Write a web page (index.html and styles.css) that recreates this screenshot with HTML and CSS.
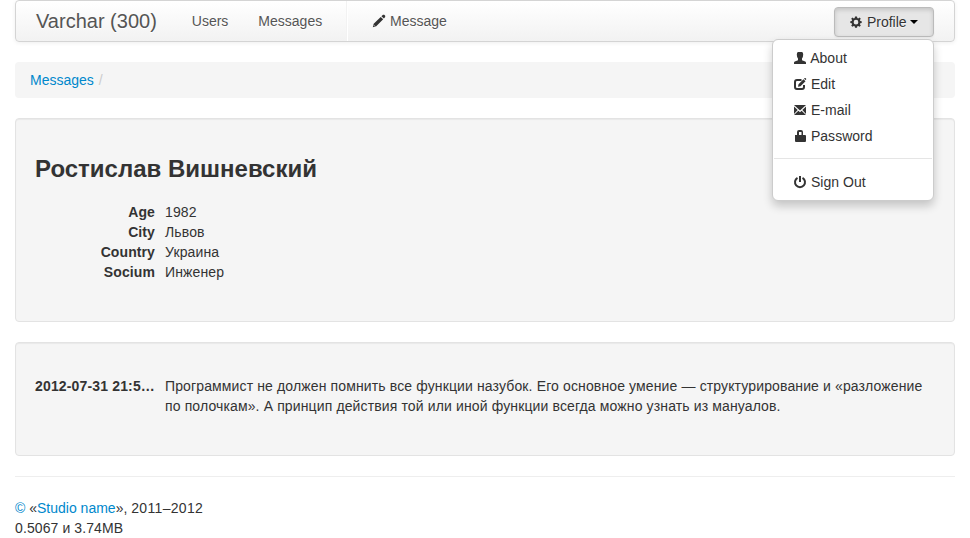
FILE: index.html
```html
<!DOCTYPE html>
<html lang="ru">
<head>
<meta charset="utf-8">
<title>Varchar (300)</title>
<link rel="stylesheet" href="styles.css">
</head>
<body>
<div class="container">
  <nav class="navbar">
    <a class="brand" href="#">Varchar (300)</a>
    <ul class="nav">
      <li><a href="#">Users</a></li>
      <li><a href="#">Messages</a></li>
      <li class="divider-vertical"></li>
      <li><a href="#"><svg class="icon" viewBox="0 0 14 14"><path d="M.8 13.200l.9-3.400L8.700 2.900l2.500 2.400L4.200 12.200zM9.400 2.200L11 .8h1.200l1 1v1.200l-1.300 1.600z"/><path class="cut" d="M1.900 11.200l1 1"/></svg> Message</a></li>
    </ul>
    <div class="btn-group">
      <a class="btn" href="#"><svg class="icon" viewBox="0 0 14 14"><path fill-rule="evenodd" d="M6 1.500h2l.3 1.500.9.400 1.400-.9 1.200 1.200-.9 1.400.4.900 1.400.3v1.700l-1.400.3-.4.900.9 1.400-1.200 1.200-1.400-.9-.9.400L8 12.800H6l-.3-1.500-.9-.4-1.400.9-1.200-1.200.9-1.400-.4-.9L1.300 8V6.300L2.700 6l.4-.9-.9-1.400 1.200-1.200 1.400.9.900-.4zM7 4.800a2.350 2.350 0 1 0 0 4.700 2.350 2.350 0 0 0 0-4.700z"/></svg> Profile <span class="caret"></span></a>
      <ul class="menu">
        <li><a href="#"><svg class="icon" viewBox="0 0 14 14"><path d="M5 1h4q1.200.4 1.200 2.500 0 2.500-1.200 4v1.700l3.200 1.200q.8.400.8 1.300V13H1v-1.300q0-.9.8-1.300L5 9.200V7.500q-1.200-1.500-1.200-4Q3.800 1.400 5 1z"/></svg> About</a></li>
        <li><a href="#"><svg class="icon" viewBox="0 0 14 14"><path class="line" d="M8.500 3H4Q2 3 2 5v5q0 2 2 2h5q2 0 2-2V8"/><path d="M5 9.800l.5-2.500 5-5 2 2-5 5zM11 1.800l.8-.8h.6l.8.800v.6l-.7.700z"/></svg> Edit</a></li>
        <li><a href="#"><svg class="icon" viewBox="0 0 14 14"><path d="M1 2h12L7 7.600zM1 3.400L4.700 7 1 11zM13 3.400L9.300 7 13 11zM5.400 7.700L7 9.200l1.600-1.500L13 12H1z"/></svg> E-mail</a></li>
        <li><a href="#"><svg class="icon" viewBox="0 0 14 14"><path fill-rule="evenodd" d="M2 6h2V3q0-2 2-2h2q2 0 2 2v3h2q1 0 1 1v5q0 1-1 1H3q-1 0-1-1zM6 6h2.500V3H6z"/></svg> Password</a></li>
        <li class="divider"></li>
        <li><a href="#"><svg class="icon" viewBox="0 0 14 14"><path class="line" d="M4.500 2.800a5 5 0 1 0 5 0M7 1v6"/></svg> Sign Out</a></li>
      </ul>
    </div>
  </nav>

  <ul class="breadcrumb"><li><a href="#">Messages</a> <span class="slash">/</span></li></ul>

  <section class="well profile">
    <h3>Ростислав Вишневский</h3>
    <dl>
      <dt>Age</dt><dd>1982</dd>
      <dt>City</dt><dd>Львов</dd>
      <dt>Country</dt><dd>Украина</dd>
      <dt>Socium</dt><dd>Инженер</dd>
    </dl>
  </section>

  <section class="well">
    <dl>
      <dt class="date">2012-07-31 21:5…</dt>
      <dd>Программист не должен помнить все функции назубок. Его основное умение — структурирование и «разложение по полочкам». А принцип действия той или иной функции всегда можно узнать из мануалов.</dd>
    </dl>
  </section>

  <hr>
  <footer><a href="#">©</a> «<a href="#">Studio name</a>», <span class="years">2011–2012</span><br><span class="stats">0.5067 и 3.74MB</span></footer>
</div>
</body>
</html>
```
FILE: styles.css
```css
* { box-sizing: border-box; }
body {
  margin: 0;
  font: 14px/20px "Liberation Sans", Arial, sans-serif;
  color: #333;
  background: #fff;
  overflow: hidden;
}
ul, dl, dd, h3 { margin: 0; padding: 0; }
ul { list-style: none; }
a { color: #08c; text-decoration: none; }
.container { width: 940px; margin: 0 auto; }

.navbar {
  display: flex;
  height: 42px;
  padding: 0 20px;
  margin-bottom: 20px;
  border: 1px solid #d4d4d4;
  border-radius: 4px;
  background: linear-gradient(#fff, #f2f2f2);
  box-shadow: 0 1px 4px rgba(0, 0, 0, .065);
}
.brand {
  padding: 10px 20px 10px 0;
  font-size: 20px;
  color: #555;
  text-shadow: 0 1px 0 #fff;
}
.nav { display: flex; }
.nav a {
  display: block;
  padding: 10px 15px;
  color: #555;
  text-shadow: 0 1px 0 #fff;
}
.divider-vertical {
  margin: 0 9px;
  border-left: 1px solid #f2f2f2;
  border-right: 1px solid #fff;
}
.icon {
  width: 14px;
  height: 14px;
  vertical-align: top;
  margin-top: 3px;
  fill: #333;
}
.line { fill: none; stroke: #333; stroke-width: 2; }
.cut { fill: none; stroke: #fff; stroke-width: .7; }

.btn-group { position: relative; margin: 6px 0 0 auto; }
.btn {
  display: block;
  width: 100px;
  height: 30px;
  padding: 4px 0 4px 14px;
  white-space: nowrap;
  color: #333;
  border: 1px solid #bbb;
  border-radius: 4px;
  background: #e6e6e6;
  box-shadow: inset 0 2px 4px rgba(0, 0, 0, .15), 0 1px 2px rgba(0, 0, 0, .05);
  text-shadow: 0 1px 1px rgba(255, 255, 255, .75);
}
.caret {
  display: inline-block;
  vertical-align: top;
  margin-top: 8px;
  border: 4px solid transparent;
  border-top-color: #000;
  border-bottom: 0;
}
.menu {
  position: absolute;
  top: 32px;
  right: 0;
  z-index: 10;
  width: 162px;
  padding: 5px 0;
  background: #fff;
  border: 1px solid #ccc;
  border-radius: 6px;
  box-shadow: 0 5px 10px rgba(0, 0, 0, .2);
}
.menu a { display: block; padding: 3px 20px; color: #333; letter-spacing: .03px; }
.menu .divider {
  height: 2px;
  margin: 9px 1px;
  background: #e5e5e5;
  border-bottom: 1px solid #fff;
}

.breadcrumb {
  padding: 8px 15px;
  margin-bottom: 20px;
  background: #f5f5f5;
  border-radius: 4px;
}
.slash { padding-left: 1px; color: #ccc; }

.well {
  padding: 33px 19px 39px;
  margin-bottom: 20px;
  background: #f5f5f5;
  border: 1px solid #e3e3e3;
  border-radius: 4px;
  box-shadow: inset 0 1px 1px rgba(0, 0, 0, .05);
}
.profile { padding-top: 30px; }
h3 { margin-bottom: 13px; font-size: 24px; line-height: 40px; }
dl { display: grid; grid-template-columns: 120px 1fr; column-gap: 10px; }
dt {
  font-weight: bold;
  text-align: right;
  white-space: nowrap;
  letter-spacing: .1px;
}
.date { letter-spacing: .15px; }
dd { letter-spacing: .13px; }
hr {
  height: 2px;
  margin: 0 0 20px;
  border: 0;
  border-top: 1px solid #eee;
  border-bottom: 1px solid #fff;
}
.years { letter-spacing: .33px; }
.stats { letter-spacing: .1px; }
```
